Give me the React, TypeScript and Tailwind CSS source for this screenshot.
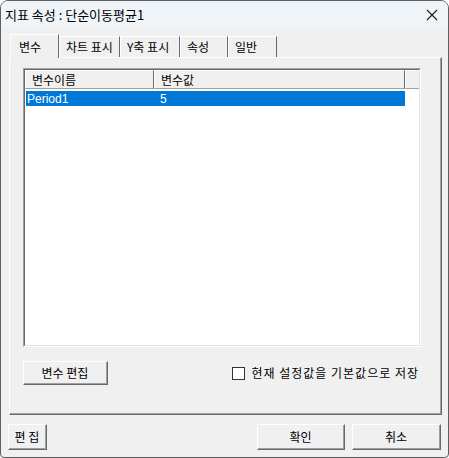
import React, { useState } from 'react'

const font = { fontFamily: '"Malgun Gothic", "Noto Sans CJK KR", "Liberation Sans", sans-serif' }

function Btn({ label, className }: { label: string; className: string }) {
  return (
    <button
      className={
        'flex items-center justify-center border border-t-white border-l-white border-r-[#696969] border-b-[#696969] bg-[#f0f0f0] text-[12px] text-black ' +
        className
      }
    >
      <span className="flex h-full w-full items-center justify-center border-r border-b border-[#a0a0a0]">{label}</span>
    </button>
  )
}

function Tab({ label, active, w }: { label: string; active?: boolean; w: string }) {
  if (active) {
    return (
      <div className={'relative z-10 -mb-[1px] flex h-[24px] items-start border-t border-l border-white border-r border-r-[#696969] bg-[#f0f0f0] px-[8px] pt-[3px] text-[12px] ' + w}>
        {label}
      </div>
    )
  }
  return (
    <div className={'flex h-[21px] items-start border-t border-l border-white border-r border-r-[#696969] bg-[#f0f0f0] pl-[6px] pt-[1px] text-[12px] ' + w}>
      {label}
    </div>
  )
}

export default function App() {
  const [checked, setChecked] = useState(false)

  return (
    <div style={font} className="h-[458px] w-[449px] overflow-hidden rounded-t-[8px] rounded-b-[4px] border border-[#5f5f5f] bg-[#f0f0f0] text-black">
      {/* title bar */}
      <div className="flex h-[27px] items-center justify-between bg-[#eff4f9] pl-[4px] pr-[10px]">
        <span className="text-[13px]">지표 속성 : 단순이동평균1</span>
        <svg width="12" height="12" viewBox="0 0 12 12" className="mt-[1px]">
          <path d="M1 1 L11 11 M11 1 L1 11" stroke="#1a1a1a" strokeWidth="1.1" />
        </svg>
      </div>

      <div className="px-[8px] pt-[6px]">
        {/* tabs */}
        <div className="flex items-end pl-[1px]">
          <Tab label="변수" active w="w-[49px]" />
          <Tab label="차트 표시" w="w-[61px]" />
          <Tab label="Y축 표시" w="w-[60px]" />
          <Tab label="속성" w="w-[48px]" />
          <Tab label="일반" w="w-[49px]" />
        </div>

        {/* panel */}
        <div className="h-[358px] w-[433px] border border-t-white border-l-white border-r-[#696969] border-b-[#696969]">
          <div className="h-full w-full border-r border-b border-[#a0a0a0] pl-[13px] pr-[19px] pt-[10px]">
            {/* list */}
            <div className="h-[279px] w-[398px] border border-t-[#a0a0a0] border-l-[#a0a0a0] border-r-white border-b-white">
              <div className="h-full w-full border border-t-[#696969] border-l-[#696969] border-r-[#e3e3e3] border-b-[#e3e3e3] bg-white">
                <div className="flex h-[19px] bg-[#f0f0f0] text-[12px]">
                  <div className="flex w-[129px] items-center border-t border-l border-white border-r border-r-[#696969] border-b border-b-[#a0a0a0] pl-[6px]">변수이름</div>
                  <div className="flex w-[251px] items-center border-t border-l border-white border-r border-r-[#696969] border-b border-b-[#a0a0a0] pl-[6px]">변수값</div>
                  <div className="flex-1 border-t border-l border-white border-b border-b-[#a0a0a0]"></div>
                </div>
                <div className="mt-[2px] ml-[1px] flex h-[15px] w-[379px] items-center bg-[#0078d7] text-[12px] text-white">
                  <span className="w-[134px] pl-[1px]" style={{ fontFamily: '"Liberation Sans", "Noto Sans CJK KR", sans-serif' }}>Period1</span>
                  <span style={{ fontFamily: '"Liberation Sans", sans-serif' }}>5</span>
                </div>
              </div>
            </div>

            <div className="mt-[14px] flex items-center">
              <Btn label="변수 편집" className="h-[24px] w-[85px]" />
              <label className="ml-auto mr-[2px] flex items-center gap-[6px] text-[12px] tracking-[1px]" onClick={() => setChecked(!checked)}>
                <span className="flex h-[13px] w-[13px] items-center justify-center border border-[#333] bg-white text-[10px] leading-none">
                  {checked ? '✓' : ''}
                </span>
                현재 설정값을 기본값으로 저장
              </label>
            </div>
          </div>
        </div>

        {/* bottom buttons */}
        <div className="mt-[9px] flex items-center">
          <Btn label="편 집" className="-ml-[1px] h-[26px] w-[39px]" />
          <Btn label="확인" className="ml-auto h-[26px] w-[88px]" />
          <Btn label="취소" className="ml-[7px] mr-[-1px] h-[26px] w-[89px]" />
        </div>
      </div>
    </div>
  )
}
